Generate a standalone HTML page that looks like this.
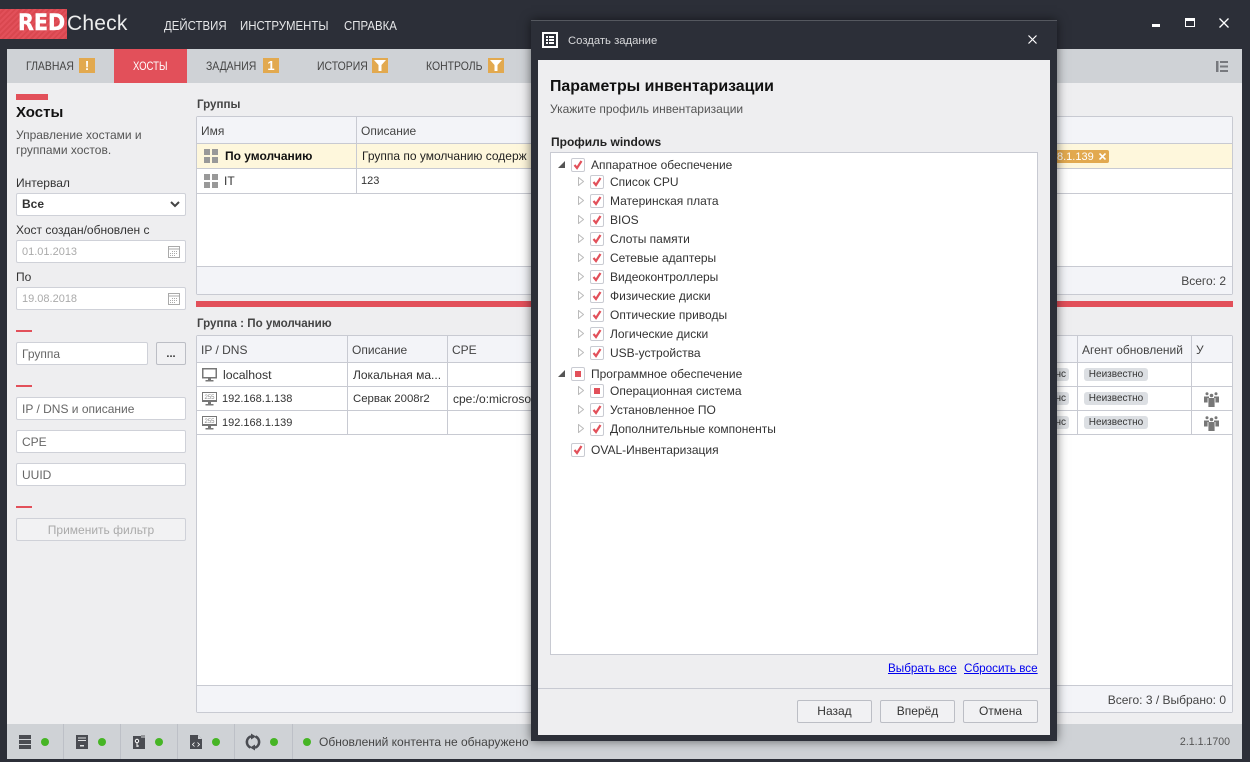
<!DOCTYPE html>
<html><head><meta charset="utf-8">
<style>
html,body{margin:0;padding:0;width:1250px;height:762px;overflow:hidden;background:#2c2f38}
body{position:relative;font-family:"Liberation Sans","DejaVu Sans",sans-serif;font-size:12px;color:#333}
div,span,a,svg{position:absolute;box-sizing:border-box}
.t{white-space:nowrap;line-height:16px;height:16px}
.b{font-weight:bold}
.in{background:#fff;border:1px solid #cfd1d8;border-radius:2px;left:16px;width:170px;height:23px}
.ph{color:#666;left:22px}
.dash{left:16px;width:16px;height:2px;background:#e2505a}
.h{background:#c8cad2;height:1px}
.v{background:#c8cad2;width:1px}
.bd{background:#e2a94f;color:#fff;width:16px;height:15px;top:58px;text-align:center;font-weight:bold;font-size:13px;line-height:15px}
.tab{color:#444;top:58px;font-size:12px;transform-origin:0 50%;transform:scaleX(.87)}
.menu{color:#e6e7e9;top:18px;font-size:13px;transform-origin:0 50%;transform:scaleX(.88)}
.cb{width:14px;height:14px;background:#fff;border:1px solid #c9cbd2;border-radius:2px}
.btn{background:#f1f1f3;border:1px solid #bcbec5;border-radius:2px;width:75px;height:23px;top:700px;text-align:center;line-height:21px;color:#333}
.dot{width:8px;height:8px;border-radius:50%;background:#46b525;top:738px}
.sep{background:#bdc0c7;width:1px;top:724px;height:35px}
.tag{background:#dcdfe3;border-radius:3px;color:#333;font-size:10px;line-height:14px;height:13px;text-align:center}
a{color:#0000ee;text-decoration:underline;font-size:11.7px}
.n{font-size:11px}
</style></head><body>

<!-- app title -->
<div style="left:0;top:9px;width:67px;height:30px;background:repeating-linear-gradient(135deg,#e2505a 0 2px,#d9474f 2px 4px)"></div>
<span class="t" style="left:18px;top:11px;height:26px;line-height:26px;color:#fff;font-size:22px;font-weight:bold;font-family:'DejaVu Sans',sans-serif;transform-origin:0 50%;transform:scaleX(.94);-webkit-text-stroke:.4px #fff">RED</span>
<span class="t" style="left:67px;top:9px;height:30px;line-height:30px;color:#eceded;font-size:21px;letter-spacing:.2px">Check</span>
<span class="t menu" style="left:164px">ДЕЙСТВИЯ</span>
<span class="t menu" style="left:240px">ИНСТРУМЕНТЫ</span>
<span class="t menu" style="left:344px">СПРАВКА</span>
<div style="left:1152px;top:24px;width:8px;height:3px;background:#fff"></div>
<div style="left:1185px;top:18px;width:10px;height:9px;border:1px solid #fff;border-top:3px solid #fff"></div>
<svg style="left:1219px;top:18px" width="10" height="10" viewBox="0 0 10 10"><path d="M.5.5l9 9M9.5.5l-9 9" stroke="#fff" stroke-width="1.3"/></svg>

<!-- content -->
<div style="left:7px;top:49px;width:1235px;height:710px;background:#eeeef0"></div>
<div style="left:7px;top:49px;width:1235px;height:34px;background:#cfd2d6"></div>
<span class="t tab" style="left:26px">ГЛАВНАЯ</span>
<div class="bd" style="left:79px">!</div>
<div style="left:114px;top:49px;width:73px;height:34px;background:#e2505a"></div>
<span class="t tab" style="left:133px;color:#fff;transform:scaleX(.8)">ХОСТЫ</span>
<span class="t tab" style="left:206px">ЗАДАНИЯ</span>
<div class="bd" style="left:263px">1</div>
<span class="t tab" style="left:317px">ИСТОРИЯ</span>
<div class="bd" style="left:372px"><svg style="left:2px;top:2px" width="12" height="11" viewBox="0 0 12 11"><path d="M0 0h12L7.500 5v6h-3V5z" fill="#fff"/></svg></div>
<span class="t tab" style="left:426px">КОНТРОЛЬ</span>
<div class="bd" style="left:488px"><svg style="left:2px;top:2px" width="12" height="11" viewBox="0 0 12 11"><path d="M0 0h12L7.500 5v6h-3V5z" fill="#fff"/></svg></div>
<svg style="left:1216px;top:61px" width="12" height="11" viewBox="0 0 12 11"><path d="M0 0h2.500v11H0zM4 0h8v2H4zM4 4.500h8v2H4zM4 9h8v2H4z" fill="#77797e"/></svg>

<!-- sidebar -->
<div style="left:16px;top:94px;width:32px;height:6px;background:#e2505a"></div>
<span class="t b" style="left:16px;top:105px;font-size:15px;color:#111">Хосты</span>
<span class="t" style="left:16px;top:127px;color:#555">Управление хостами и</span>
<span class="t" style="left:16px;top:142px;color:#555">группами хостов.</span>
<span class="t" style="left:16px;top:175px;color:#333">Интервал</span>
<div class="in" style="top:193px"></div>
<span class="t b" style="left:22px;top:196px;color:#333">Все</span>
<svg style="left:170px;top:201px" width="10" height="7" viewBox="0 0 10 7"><path d="M1 1l4 4 4-4" fill="none" stroke="#444" stroke-width="2"/></svg>
<span class="t" style="left:16px;top:222px;color:#333">Хост создан/обновлен с</span>
<div class="in" style="top:240px"></div>
<span class="t n" style="left:22px;top:244px;color:#aaa">01.01.2013</span>
<svg style="left:168px;top:246px" width="12" height="12" viewBox="0 0 12 12"><path d="M.5.500h11v11H.5zM.5 3h11" fill="none" stroke="#aaa"/><path d="M4 5h1v1H4zM6 5h1v1H6zM8 5h1v1H8zM2 7h1v1H2zM4 7h1v1H4zM6 7h1v1H6zM8 7h1v1H8zM2 9h1v1H2zM4 9h1v1H4zM6 9h1v1H6z" fill="#aaa"/></svg>
<span class="t" style="left:16px;top:269px;color:#333">По</span>
<div class="in" style="top:287px"></div>
<span class="t n" style="left:22px;top:291px;color:#aaa">19.08.2018</span>
<svg style="left:168px;top:293px" width="12" height="12" viewBox="0 0 12 12"><path d="M.5.500h11v11H.5zM.5 3h11" fill="none" stroke="#aaa"/><path d="M4 5h1v1H4zM6 5h1v1H6zM8 5h1v1H8zM2 7h1v1H2zM4 7h1v1H4zM6 7h1v1H6zM8 7h1v1H8zM2 9h1v1H2zM4 9h1v1H4zM6 9h1v1H6z" fill="#aaa"/></svg>
<div class="dash" style="top:330px"></div>
<div class="in" style="top:342px;width:132px"></div>
<span class="t ph" style="top:346px">Группа</span>
<div style="left:156px;top:342px;width:30px;height:23px;background:#f1f1f3;border:1px solid #bcbec5;border-radius:2px;text-align:center;line-height:22px;font-weight:bold;font-size:11px">...</div>
<div class="dash" style="top:385px"></div>
<div class="in" style="top:397px"></div>
<span class="t ph" style="top:401px">IP / DNS и описание</span>
<div class="in" style="top:430px"></div>
<span class="t ph" style="top:434px">CPE</span>
<div class="in" style="top:463px"></div>
<span class="t ph" style="top:467px">UUID</span>
<div class="dash" style="top:506px"></div>
<div class="in" style="top:518px;background:#f2f2f3"></div>
<span class="t" style="left:16px;width:170px;text-align:center;top:522px;color:#aaa">Применить фильтр</span>

<!-- groups table -->
<span class="t b" style="left:197px;top:97px;color:#444;font-size:11.6px">Группы</span>
<div style="left:196px;top:116px;width:1037px;height:179px;background:#fff;border:1px solid #c8cad2;border-radius:2px"></div>
<div style="left:197px;top:117px;width:1035px;height:26px;background:#f3f4f8"></div>
<div style="left:197px;top:144px;width:1035px;height:24px;background:#fef7dc"></div>
<div style="left:197px;top:267px;width:1035px;height:27px;background:#f3f4f8"></div>
<div class="h" style="left:197px;top:143px;width:1035px"></div>
<div class="h" style="left:197px;top:168px;width:1035px"></div>
<div class="h" style="left:197px;top:193px;width:1035px"></div>
<div class="h" style="left:197px;top:266px;width:1035px"></div>
<div class="v" style="left:356px;top:117px;height:76px"></div>
<span class="t" style="left:201px;top:123px;color:#444">Имя</span>
<span class="t" style="left:361px;top:123px;color:#444">Описание</span>
<svg style="left:204px;top:149px" width="14" height="14" viewBox="0 0 14 14"><path d="M0 0h6v6H0zM8 0h6v6H8zM0 8h6v6H0zM8 8h6v6H8z" fill="#999"/></svg>
<span class="t b" style="left:225px;top:148px;color:#111">По умолчанию</span>
<span class="t" style="left:362px;top:148px;color:#222">Группа по умолчанию содерж</span>
<svg style="left:204px;top:174px" width="14" height="14" viewBox="0 0 14 14"><path d="M0 0h6v6H0zM8 0h6v6H8zM0 8h6v6H0zM8 8h6v6H8z" fill="#999"/></svg>
<span class="t" style="left:224px;top:173px;color:#333">IT</span>
<span class="t n" style="left:361px;top:173px;color:#333">123</span>
<div style="left:1050px;top:150px;width:59px;height:13px;background:#e2a94f;border-radius:2px"></div>
<span class="t" style="left:1057px;top:149px;color:#fff;font-size:11px">8.1.139</span>
<svg style="left:1099px;top:153px" width="7" height="7" viewBox="0 0 7 7"><path d="M.5.500l6 6M6.500.500l-6 6" stroke="#fff" stroke-width="1.6"/></svg>
<span class="t" style="right:24px;top:273px;color:#444">Всего: 2</span>

<div style="left:196px;top:301px;width:1037px;height:6px;background:#e2505a"></div>

<!-- hosts table -->
<span class="t b" style="left:197px;top:316px;color:#444;font-size:11.6px">Группа : По умолчанию</span>
<div style="left:196px;top:335px;width:1037px;height:378px;background:#fff;border:1px solid #c8cad2;border-radius:2px"></div>
<div style="left:197px;top:336px;width:1035px;height:26px;background:#f3f4f8"></div>
<div style="left:197px;top:686px;width:1035px;height:26px;background:#f3f4f8"></div>
<div class="h" style="left:197px;top:362px;width:1035px"></div>
<div class="h" style="left:197px;top:386px;width:1035px"></div>
<div class="h" style="left:197px;top:410px;width:1035px"></div>
<div class="h" style="left:197px;top:434px;width:1035px"></div>
<div class="h" style="left:197px;top:685px;width:1035px"></div>
<div class="v" style="left:347px;top:336px;height:98px"></div>
<div class="v" style="left:447px;top:336px;height:98px"></div>
<div class="v" style="left:1077px;top:336px;height:98px"></div>
<div class="v" style="left:1191px;top:336px;height:98px"></div>
<span class="t" style="left:201px;top:342px;color:#444">IP / DNS</span>
<span class="t" style="left:352px;top:342px;color:#444">Описание</span>
<span class="t" style="left:452px;top:342px;color:#444">CPE</span>
<span class="t" style="left:1082px;top:342px;color:#444">Агент обновлений</span>
<span class="t" style="left:1196px;top:342px;color:#444">У</span>

<svg style="left:202px;top:368px" width="15" height="14" viewBox="0 0 15 14"><path d="M.75.750h13.500v9H.75z" fill="#fff" stroke="#777" stroke-width="1.5"/><path d="M0 9h15v1.500H0zM6 10h3v2H6zM3.500 12h8v1.500h-8z" fill="#777"/></svg>
<span class="t" style="left:223px;top:367px;color:#333;font-size:12.3px">localhost</span>
<span class="t" style="left:353px;top:367px;color:#333">Локальная ма...</span>
<svg style="left:202px;top:392px" width="15" height="14" viewBox="0 0 15 14"><path d="M.500.500h14v9H.5z" fill="#fff" stroke="#777"/><text x="7.500" y="6.800" font-size="6" text-anchor="middle" fill="#888" font-family="Liberation Sans">255</text><path d="M0 8h15v2H0zM6 10h3v2H6zM3.500 12h8v1.500h-8z" fill="#777"/></svg>
<span class="t n" style="left:222px;top:391px;color:#333">192.168.1.138</span>
<span class="t" style="left:353px;top:391px;color:#333;font-size:11.4px">Сервак 2008r2</span>
<span class="t" style="left:453px;top:391px;color:#333;width:78px;overflow:hidden">cpe:/o:microsoft</span>
<svg style="left:202px;top:416px" width="15" height="14" viewBox="0 0 15 14"><path d="M.500.500h14v9H.5z" fill="#fff" stroke="#777"/><text x="7.500" y="6.800" font-size="6" text-anchor="middle" fill="#888" font-family="Liberation Sans">255</text><path d="M0 8h15v2H0zM6 10h3v2H6zM3.500 12h8v1.500h-8z" fill="#777"/></svg>
<span class="t n" style="left:222px;top:415px;color:#333">192.168.1.139</span>

<div class="tag" style="left:1040px;top:368px;width:29px;text-align:right;padding-right:3px">нс</div>
<div class="tag" style="left:1040px;top:392px;width:29px;text-align:right;padding-right:3px">нс</div>
<div class="tag" style="left:1040px;top:416px;width:29px;text-align:right;padding-right:3px">нс</div>
<div class="tag" style="left:1084px;top:368px;width:64px">Неизвестно</div>
<div class="tag" style="left:1084px;top:392px;width:64px">Неизвестно</div>
<div class="tag" style="left:1084px;top:416px;width:64px">Неизвестно</div>
<svg style="left:1204px;top:392px" width="15" height="15" viewBox="0 0 15 15"><g fill="#777"><circle cx="3" cy="1.800" r="1.500"/><circle cx="12" cy="1.800" r="1.500"/><circle cx="7.500" cy="3.500" r="1.800"/><path d="M0 4.500h5v6H0zM10 4.500h5v6h-5zM4 6h7v9H4z"/></g><path d="M4 6v9M11 6v9" stroke="#fff" stroke-width=".8"/></svg>
<svg style="left:1204px;top:416px" width="15" height="15" viewBox="0 0 15 15"><g fill="#777"><circle cx="3" cy="1.800" r="1.500"/><circle cx="12" cy="1.800" r="1.500"/><circle cx="7.500" cy="3.500" r="1.800"/><path d="M0 4.500h5v6H0zM10 4.500h5v6h-5zM4 6h7v9H4z"/></g><path d="M4 6v9M11 6v9" stroke="#fff" stroke-width=".8"/></svg>
<span class="t" style="right:24px;top:692px;color:#444">Всего: 3 / Выбрано: 0</span>

<!-- status bar -->
<div style="left:7px;top:724px;width:1235px;height:35px;background:#cfd2d6"></div>
<div class="sep" style="left:63px"></div><div class="sep" style="left:120px"></div><div class="sep" style="left:177px"></div><div class="sep" style="left:234px"></div><div class="sep" style="left:292px"></div>
<svg style="left:19px;top:735px" width="12" height="14" viewBox="0 0 12 14"><path d="M0 0h12v4H0zM0 5h12v4H0zM0 10h12v4H0z" fill="#4a4c52"/></svg>
<div class="dot" style="left:41px"></div>
<svg style="left:76px;top:735px" width="12" height="14" viewBox="0 0 12 14"><path d="M0 0h12v14H0z" fill="#4a4c52"/><path d="M2 2.500h8v1H2zM2 5h8v1H2zM4 10h4v1.500H4z" fill="#dfe0e2"/></svg>
<div class="dot" style="left:98px"></div>
<svg style="left:133px;top:735px" width="12" height="14" viewBox="0 0 12 14"><path d="M0 1h8V0h4v14H0z" fill="#4a4c52"/><path d="M8.500 0h1v3h-1zM10.500 0h1v3h-1z" fill="#dfe0e2"/><circle cx="4" cy="6" r="1.700" fill="none" stroke="#fff"/><path d="M4 8v4M4 11h2" stroke="#fff"/></svg>
<div class="dot" style="left:155px"></div>
<svg style="left:190px;top:735px" width="12" height="14" viewBox="0 0 12 14"><path d="M0 0h8l4 4v10H0z" fill="#4a4c52"/><path d="M8 0l4 4H8z" fill="#cfd2d6"/><path d="M4.500 7.500L2.500 9.500l2 2M7.500 7.500l2 2-2 2" fill="none" stroke="#fff" stroke-width=".8"/></svg>
<div class="dot" style="left:212px"></div>
<svg style="left:245px;top:733px" width="16" height="18" viewBox="0 0 16 18"><path d="M6 3.300A6 6 0 0 0 5.500 14.500M10 14.700A6 6 0 0 0 10.500 3.500" fill="none" stroke="#4a4c52" stroke-width="2.6"/><path d="M6 .5l5 3-5 3zM10 17.500l-5-3 5-3z" fill="#4a4c52"/></svg>
<div class="dot" style="left:270px"></div>
<div class="dot" style="left:303px"></div>
<span class="t" style="left:319px;top:734px;color:#444">Обновлений контента не обнаружено</span>
<span class="t" style="right:20px;top:734px;color:#555;font-size:10.6px">2.1.1.1700</span>

<!-- modal -->
<div style="left:531px;top:20px;width:526px;height:721px;background:#2c2f38;border-top:1px solid #55585f;box-shadow:0 0 10px rgba(0,0,0,.55)"></div>
<svg style="left:542px;top:32px" width="16" height="16" viewBox="0 0 16 16"><path d="M0 0h16v16H0z" fill="#fff"/><path d="M2 2h12v12H2z" fill="#2c2f38"/><path d="M4 4h2v2H4zM7 4h5v2H7zM4 7h2v2H4zM7 7h5v2H7zM4 10h2v2H4zM7 10h5v2H7z" fill="#fff"/></svg>
<span class="t" style="left:568px;top:33px;color:#d8d9db;font-size:11.3px">Создать задание</span>
<svg style="left:1028px;top:35px" width="9" height="9" viewBox="0 0 9 9"><path d="M.5.500l8 8M8.500.500l-8 8" stroke="#fff" stroke-width="1.200"/></svg>
<div style="left:538px;top:60px;width:512px;height:675px;background:#eeeef0"></div>
<span class="t b" style="left:550px;top:78px;height:18px;line-height:18px;font-size:15.9px;color:#111">Параметры инвентаризации</span>
<span class="t" style="left:550px;top:101px;color:#555">Укажите профиль инвентаризации</span>
<span class="t b" style="left:551px;top:134px;color:#222">Профиль windows</span>
<div style="left:550px;top:152px;width:488px;height:503px;background:#fff;border:1px solid #c8cad2"></div>

<svg style="left:557px;top:160px" width="9" height="9" viewBox="0 0 9 9"><path d="M8 1v7H1z" fill="#555"/></svg>
<div class="cb" style="left:571px;top:158px"></div>
<svg style="left:573px;top:160px" width="10" height="10" viewBox="0 0 10 10"><path d="M1.500 5l2.500 3 4.500-7" fill="none" stroke="#e2505a" stroke-width="2.2"/></svg>
<span class="t" style="left:591px;top:157px;color:#333">Аппаратное обеспечение</span>
<svg style="left:557px;top:369px" width="9" height="9" viewBox="0 0 9 9"><path d="M8 1v7H1z" fill="#555"/></svg>
<div class="cb" style="left:571px;top:367px"></div>
<div style="left:575px;top:371px;width:6px;height:6px;background:#e2505a"></div>
<span class="t" style="left:591px;top:366px;color:#333">Программное обеспечение</span>
<div class="cb" style="left:571px;top:443px"></div>
<svg style="left:573px;top:445px" width="10" height="10" viewBox="0 0 10 10"><path d="M1.500 5l2.500 3 4.500-7" fill="none" stroke="#e2505a" stroke-width="2.2"/></svg>
<span class="t" style="left:591px;top:442px;color:#333">OVAL-Инвентаризация</span>

<svg style="left:578px;top:177px" width="6" height="9" viewBox="0 0 6 9"><path d="M.5.500l5 4-5 4z" fill="#fff" stroke="#bbb"/></svg>
<div class="cb" style="left:590px;top:175px"></div>
<svg style="left:592px;top:177px" width="10" height="10" viewBox="0 0 10 10"><path d="M1.500 5l2.500 3 4.500-7" fill="none" stroke="#e2505a" stroke-width="2.2"/></svg>
<span class="t" style="left:610px;top:174px;color:#333">Список CPU</span>

<svg style="left:578px;top:196px" width="6" height="9" viewBox="0 0 6 9"><path d="M.5.500l5 4-5 4z" fill="#fff" stroke="#bbb"/></svg>
<div class="cb" style="left:590px;top:194px"></div>
<svg style="left:592px;top:196px" width="10" height="10" viewBox="0 0 10 10"><path d="M1.500 5l2.500 3 4.500-7" fill="none" stroke="#e2505a" stroke-width="2.2"/></svg>
<span class="t" style="left:610px;top:193px;color:#333">Материнская плата</span>

<svg style="left:578px;top:215px" width="6" height="9" viewBox="0 0 6 9"><path d="M.5.500l5 4-5 4z" fill="#fff" stroke="#bbb"/></svg>
<div class="cb" style="left:590px;top:213px"></div>
<svg style="left:592px;top:215px" width="10" height="10" viewBox="0 0 10 10"><path d="M1.500 5l2.500 3 4.500-7" fill="none" stroke="#e2505a" stroke-width="2.2"/></svg>
<span class="t" style="left:610px;top:212px;color:#333">BIOS</span>

<svg style="left:578px;top:234px" width="6" height="9" viewBox="0 0 6 9"><path d="M.5.500l5 4-5 4z" fill="#fff" stroke="#bbb"/></svg>
<div class="cb" style="left:590px;top:232px"></div>
<svg style="left:592px;top:234px" width="10" height="10" viewBox="0 0 10 10"><path d="M1.500 5l2.500 3 4.500-7" fill="none" stroke="#e2505a" stroke-width="2.2"/></svg>
<span class="t" style="left:610px;top:231px;color:#333">Слоты памяти</span>

<svg style="left:578px;top:253px" width="6" height="9" viewBox="0 0 6 9"><path d="M.5.500l5 4-5 4z" fill="#fff" stroke="#bbb"/></svg>
<div class="cb" style="left:590px;top:251px"></div>
<svg style="left:592px;top:253px" width="10" height="10" viewBox="0 0 10 10"><path d="M1.500 5l2.500 3 4.500-7" fill="none" stroke="#e2505a" stroke-width="2.2"/></svg>
<span class="t" style="left:610px;top:250px;color:#333">Сетевые адаптеры</span>

<svg style="left:578px;top:272px" width="6" height="9" viewBox="0 0 6 9"><path d="M.5.500l5 4-5 4z" fill="#fff" stroke="#bbb"/></svg>
<div class="cb" style="left:590px;top:270px"></div>
<svg style="left:592px;top:272px" width="10" height="10" viewBox="0 0 10 10"><path d="M1.500 5l2.500 3 4.500-7" fill="none" stroke="#e2505a" stroke-width="2.2"/></svg>
<span class="t" style="left:610px;top:269px;color:#333">Видеоконтроллеры</span>

<svg style="left:578px;top:291px" width="6" height="9" viewBox="0 0 6 9"><path d="M.5.500l5 4-5 4z" fill="#fff" stroke="#bbb"/></svg>
<div class="cb" style="left:590px;top:289px"></div>
<svg style="left:592px;top:291px" width="10" height="10" viewBox="0 0 10 10"><path d="M1.500 5l2.500 3 4.500-7" fill="none" stroke="#e2505a" stroke-width="2.2"/></svg>
<span class="t" style="left:610px;top:288px;color:#333">Физические диски</span>

<svg style="left:578px;top:310px" width="6" height="9" viewBox="0 0 6 9"><path d="M.5.500l5 4-5 4z" fill="#fff" stroke="#bbb"/></svg>
<div class="cb" style="left:590px;top:308px"></div>
<svg style="left:592px;top:310px" width="10" height="10" viewBox="0 0 10 10"><path d="M1.500 5l2.500 3 4.500-7" fill="none" stroke="#e2505a" stroke-width="2.2"/></svg>
<span class="t" style="left:610px;top:307px;color:#333">Оптические приводы</span>

<svg style="left:578px;top:329px" width="6" height="9" viewBox="0 0 6 9"><path d="M.5.500l5 4-5 4z" fill="#fff" stroke="#bbb"/></svg>
<div class="cb" style="left:590px;top:327px"></div>
<svg style="left:592px;top:329px" width="10" height="10" viewBox="0 0 10 10"><path d="M1.500 5l2.500 3 4.500-7" fill="none" stroke="#e2505a" stroke-width="2.2"/></svg>
<span class="t" style="left:610px;top:326px;color:#333">Логические диски</span>

<svg style="left:578px;top:348px" width="6" height="9" viewBox="0 0 6 9"><path d="M.5.500l5 4-5 4z" fill="#fff" stroke="#bbb"/></svg>
<div class="cb" style="left:590px;top:346px"></div>
<svg style="left:592px;top:348px" width="10" height="10" viewBox="0 0 10 10"><path d="M1.500 5l2.500 3 4.500-7" fill="none" stroke="#e2505a" stroke-width="2.2"/></svg>
<span class="t" style="left:610px;top:345px;color:#333">USB-устройства</span>

<svg style="left:578px;top:386px" width="6" height="9" viewBox="0 0 6 9"><path d="M.5.500l5 4-5 4z" fill="#fff" stroke="#bbb"/></svg>
<div class="cb" style="left:590px;top:384px"></div>
<div style="left:594px;top:388px;width:6px;height:6px;background:#e2505a"></div>
<span class="t" style="left:610px;top:383px;color:#333">Операционная система</span>

<svg style="left:578px;top:405px" width="6" height="9" viewBox="0 0 6 9"><path d="M.5.500l5 4-5 4z" fill="#fff" stroke="#bbb"/></svg>
<div class="cb" style="left:590px;top:403px"></div>
<svg style="left:592px;top:405px" width="10" height="10" viewBox="0 0 10 10"><path d="M1.500 5l2.500 3 4.500-7" fill="none" stroke="#e2505a" stroke-width="2.2"/></svg>
<span class="t" style="left:610px;top:402px;color:#333">Установленное ПО</span>

<svg style="left:578px;top:424px" width="6" height="9" viewBox="0 0 6 9"><path d="M.5.500l5 4-5 4z" fill="#fff" stroke="#bbb"/></svg>
<div class="cb" style="left:590px;top:422px"></div>
<svg style="left:592px;top:424px" width="10" height="10" viewBox="0 0 10 10"><path d="M1.500 5l2.500 3 4.500-7" fill="none" stroke="#e2505a" stroke-width="2.2"/></svg>
<span class="t" style="left:610px;top:421px;color:#333">Дополнительные компоненты</span>

<a class="t" style="left:888px;top:661px" href="#">Выбрать все</a>
<a class="t" style="left:964px;top:661px" href="#">Сбросить все</a>
<div class="h" style="left:538px;top:688px;width:512px"></div>
<div class="btn" style="left:797px">Назад</div>
<div class="btn" style="left:880px">Вперёд</div>
<div class="btn" style="left:963px">Отмена</div>
</body></html>
